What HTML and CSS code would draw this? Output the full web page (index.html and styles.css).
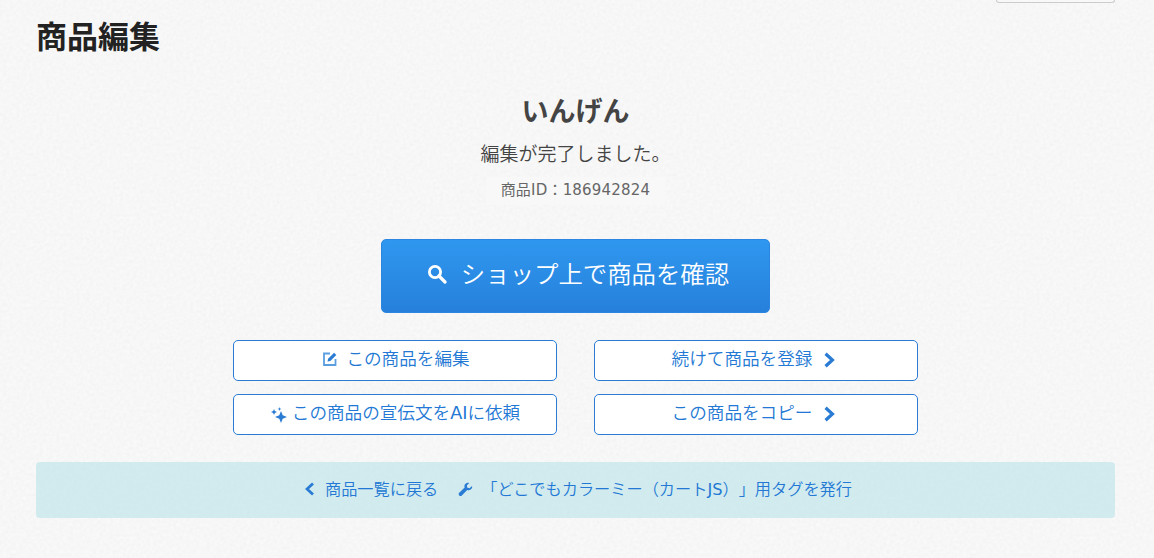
FILE: index.html
```html
<!DOCTYPE html>
<html lang="ja">
<head>
  <meta charset="UTF-8">
  <title>商品編集</title>
  <link rel="stylesheet" href="styles.css">
</head>
<body>
  <div class="top-bar">
    <div class="top-button"></div>
  </div>

  <h1 class="page-title">商品編集</h1>

  <div class="result">
    <h2 class="item-name">いんげん</h2>
    <p class="message">編集が完了しました。</p>
    <p class="item-id">商品ID：186942824</p>

    <a class="btn-main" href="#">
      <svg class="icon-search" viewBox="0 0 20 20">
        <circle cx="8" cy="8" r="5.6" fill="none" stroke="#fff" stroke-width="2.8"/>
        <path d="M12 12l6 6" fill="none" stroke="#fff" stroke-width="3.2" stroke-linecap="round"/>
      </svg>
      <span class="label">ショップ上で商品を確認</span>
    </a>

    <div class="btn-grid">
      <a class="btn-sub btn-edit" href="#">
        <svg class="icon-edit" viewBox="0 0 16 16">
          <path d="M8 2.5H2v11.500h11.500V8" fill="none" stroke="#5b9ee0" stroke-width="1.800"/>
          <path d="M5.500 10.500l.6-2.800 6-6 2.200 2.200-6 6z" fill="#2a7bd3"/>
        </svg>
        <span class="label">この商品を編集</span>
      </a>
      <a class="btn-sub btn-next" href="#">
        <span class="label">続けて商品を登録</span>
        <svg class="icon-arrow" viewBox="0 0 10 14">
          <path d="M2 1.500L8 7l-6 5.500" fill="none" stroke="#2a7bd3" stroke-width="2.800"/>
        </svg>
      </a>
      <a class="btn-sub btn-ai" href="#">
        <svg class="icon-spark" viewBox="0 0 18 18">
          <path d="M11 5l1.700 4.300L17 11l-4.300 1.700L11 17l-1.700-4.300L5 11l4.300-1.700z" fill="#2a7bd3"/>
          <path d="M4 3l.9 2.100L7 6l-2.100.9L4 9l-.9-2.100L1 6l2.100-.9z" fill="#2a7bd3"/>
          <path d="M9.500 1l.5 1.500 1.500.5-1.500.5-.5 1.500-.5-1.500L7.500 3 9 2.500z" fill="#2a7bd3"/>
        </svg>
        <span class="label">この商品の宣伝文を<span class="latin">AI</span>に依頼</span>
      </a>
      <a class="btn-sub btn-next" href="#">
        <span class="label">この商品をコピー</span>
        <svg class="icon-arrow" viewBox="0 0 10 14">
          <path d="M2 1.500L8 7l-6 5.500" fill="none" stroke="#2a7bd3" stroke-width="2.800"/>
        </svg>
      </a>
    </div>
  </div>

  <div class="link-bar">
    <a class="bar-link" href="#">
      <svg class="icon-back" viewBox="0 0 10 14">
        <path d="M8 1.500L2 7l6 5.500" fill="none" stroke="#2a7bd3" stroke-width="2.800"/>
      </svg>
      <span class="label">商品一覧に戻る</span>
    </a>
    <a class="bar-link bar-tag" href="#">
      <svg class="icon-wrench" viewBox="0 0 16 16">
        <path d="M15 4.200l-2.700 2.500-2.300-.6-.6-2.300L11.900 1C9.800.3 7.600 1.300 7 3.300c-.3.900-.2 1.700.1 2.500L1.300 11.500c-.8.800-.8 2 0 2.800s2 .8 2.800 0l5.700-5.800c.8.300 1.700.4 2.500.1 2-.7 3.300-2.400 2.700-4.400z" fill="#2a7bd3"/>
      </svg>
      <span class="label">「どこでもカラーミー（カート<span class="latin">JS</span>）」用タグを発行</span>
    </a>
  </div>
</body>
</html>
```

FILE: styles.css
```css
body {
  margin: 0;
  padding: 0 39px 0 36px;
  background-color: #fbfbfb;
  background-image: url("data:image/svg+xml,%3Csvg xmlns='http://www.w3.org/2000/svg' width='320' height='320'%3E%3Cfilter id='n'%3E%3CfeTurbulence type='fractalNoise' baseFrequency='.3' numOctaves='3' stitchTiles='stitch'/%3E%3CfeColorMatrix values='0 0 0 0 0 0 0 0 0 0 0 0 0 0 0 .035 0 0 0 0'/%3E%3C/filter%3E%3Crect width='320' height='320' filter='url(%23n)'/%3E%3C/svg%3E");
  font-family: "DejaVu Sans", "Noto Sans CJK JP", sans-serif;
  text-spacing-trim: space-all;
  color: #444;
}

a {
  text-decoration: none;
}

p {
  margin: 0;
}

.latin {
  font-weight: 400;
}

.top-bar {
  display: flex;
  justify-content: flex-end;
  height: 3px;
}

.top-button {
  width: 119px;
  height: 3px;
  border: 1px solid #ccc;
  border-top: 0;
  border-radius: 0 0 4px 4px;
  box-sizing: border-box;
  background-color: #f8f8f8;
}

.page-title {
  margin: 13px 0 0;
  font-size: 31px;
  line-height: 42px;
  font-weight: 700;
  color: #222;
}

.result {
  display: flex;
  flex-direction: column;
  align-items: center;
}

.item-name {
  margin: 34px 0 0;
  font-size: 27px;
  line-height: 40px;
  font-weight: 700;
  color: #444;
}

.message {
  margin-top: 7px;
  font-size: 19px;
  line-height: 30px;
  font-weight: 350;
}

.item-id {
  margin-top: 8px;
  padding: 0 14.500px 2px;
  font-size: 15px;
  letter-spacing: 0.2px;
  line-height: 26px;
  color: #666;
  background-color: #f8f8f8;
}

.btn-main {
  display: flex;
  align-items: center;
  justify-content: center;
  gap: 14px;
  width: 389px;
  height: 74px;
  margin-top: 34px;
  padding-left: 5px;
  border-radius: 5px;
  box-sizing: border-box;
  border: 1px solid #2a86e0;
  background: linear-gradient(#2f97ef, #2680db);
  color: #fff;
  font-size: 24.400px;
  font-weight: 350;
}

.btn-main .label {
  padding-bottom: 7px;
}

.icon-search {
  width: 20px;
  height: 20px;
  margin-bottom: 4px;
}

.btn-grid {
  display: grid;
  grid-template-columns: 324px 324px;
  column-gap: 37px;
  row-gap: 13px;
  margin-top: 27px;
}

.btn-sub {
  display: flex;
  align-items: center;
  justify-content: center;
  gap: 10px;
  height: 41px;
  box-sizing: border-box;
  border: 1px solid #2a7bd3;
  border-radius: 5px;
  background-color: #fff;
  color: #2278d4;
  font-size: 17.600px;
  font-weight: 350;
}

.btn-sub .label {
  padding-bottom: 6px;
}

.btn-edit {
  gap: 8px;
}

.btn-next {
  gap: 11px;
  padding-right: 5px;
}

.btn-ai {
  gap: 4px;
}

.icon-edit {
  width: 16px;
  height: 16px;
  margin: 0 0 3px 2px;
}

.icon-arrow {
  width: 12px;
  height: 16px;
  margin-bottom: 2px;
}

.icon-spark {
  width: 18px;
  height: 18px;
}

.link-bar {
  display: flex;
  align-items: center;
  justify-content: center;
  gap: 20px;
  height: 56px;
  margin-top: 27px;
  padding-left: 6px;
  box-sizing: border-box;
  border-radius: 4px;
  background-color: rgba(184, 227, 234, 0.6);
}

.bar-link {
  display: flex;
  align-items: center;
  gap: 10px;
  color: #2278d4;
  font-size: 16.200px;
  font-weight: 350;
}

.bar-tag {
  gap: 8px;
}

.bar-link .label {
  padding-bottom: 5px;
}

.icon-back {
  width: 10px;
  height: 14px;
  margin-bottom: 2px;
}

.icon-wrench {
  width: 15px;
  height: 15px;
  margin-bottom: 2px;
}
```
